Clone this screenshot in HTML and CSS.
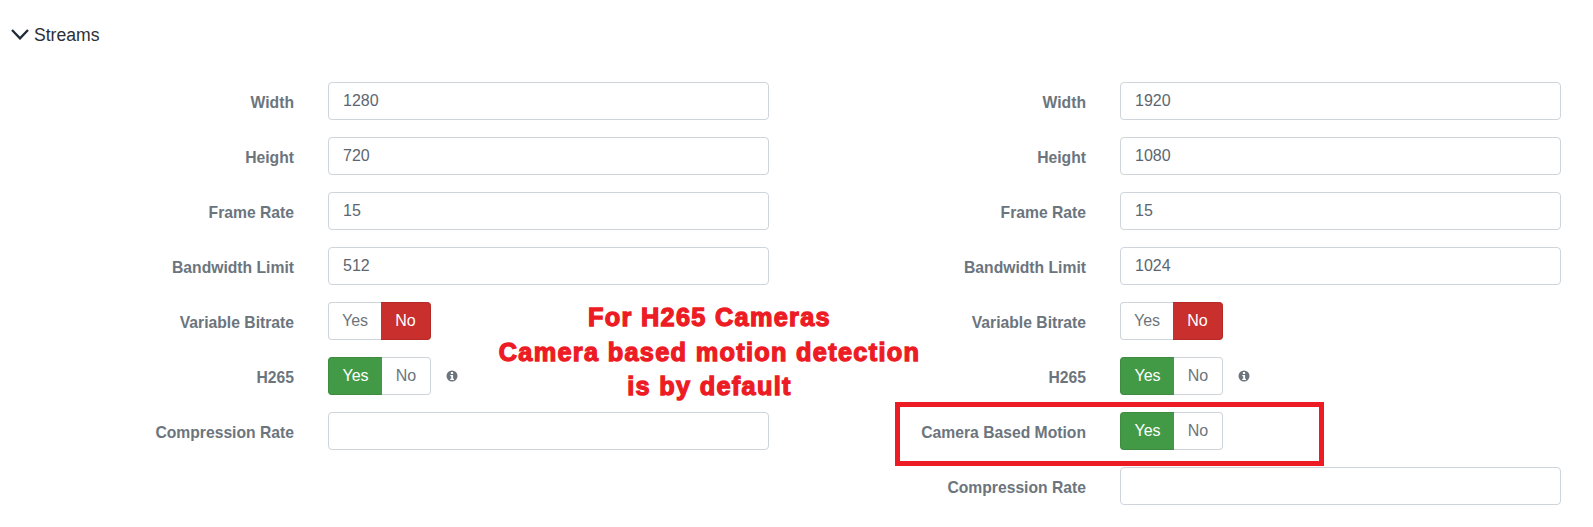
FILE: index.html
```html
<!DOCTYPE html>
<html lang="en">
<head>
<meta charset="utf-8">
<title>Streams</title>
<link rel="stylesheet" href="styles.css">
</head>
<body>
<header class="section-head">
  <svg class="chevron" viewBox="0 0 18 11" width="18" height="11"><path d="M1 1 9 9.400 17 1" fill="none" stroke="#212b36" stroke-width="2.300"/></svg>
  <span>Streams</span>
</header>
<main class="columns">
  <section class="col">
    <div class="row"><label>Width</label><input class="field" value="1280"></div>
    <div class="row"><label>Height</label><input class="field" value="720"></div>
    <div class="row"><label>Frame Rate</label><input class="field" value="15"></div>
    <div class="row"><label>Bandwidth Limit</label><input class="field" value="512"></div>
    <div class="row"><label>Variable Bitrate</label><div class="toggle"><span class="opt narrow">Yes</span><span class="opt no-on">No</span></div></div>
    <div class="row"><label>H265</label><div class="toggle"><span class="opt yes-on">Yes</span><span class="opt">No</span></div>
      <svg class="info" viewBox="0 0 12 12" width="12" height="12"><circle cx="6" cy="6" r="5.5" fill="#6c757d"/><rect x="4.9" y="2" width="2.2" height="2" fill="#fff"/><path d="M4.3 5h2.800v3.800h.9V10H4.200V8.800h1V6.200h-.9z" fill="#fff"/></svg></div>
    <div class="row"><label>Compression Rate</label><input class="field" value=""></div>
  </section>
  <section class="col">
    <div class="row"><label>Width</label><input class="field" value="1920"></div>
    <div class="row"><label>Height</label><input class="field" value="1080"></div>
    <div class="row"><label>Frame Rate</label><input class="field" value="15"></div>
    <div class="row"><label>Bandwidth Limit</label><input class="field" value="1024"></div>
    <div class="row"><label>Variable Bitrate</label><div class="toggle"><span class="opt narrow">Yes</span><span class="opt no-on">No</span></div></div>
    <div class="row"><label>H265</label><div class="toggle"><span class="opt yes-on">Yes</span><span class="opt">No</span></div>
      <svg class="info" viewBox="0 0 12 12" width="12" height="12"><circle cx="6" cy="6" r="5.5" fill="#6c757d"/><rect x="4.9" y="2" width="2.2" height="2" fill="#fff"/><path d="M4.3 5h2.800v3.800h.9V10H4.200V8.800h1V6.200h-.9z" fill="#fff"/></svg></div>
    <div class="row"><label>Camera Based Motion</label><div class="toggle"><span class="opt yes-on">Yes</span><span class="opt">No</span></div></div>
    <div class="row"><label>Compression Rate</label><input class="field" value=""></div>
  </section>
</main>
<div class="note">For H265 Cameras<br>Camera based motion detection<br>is by default</div>
<div class="highlight"></div>
</body>
</html>
```
FILE: styles.css
```css
* { box-sizing: border-box; }
html, body { margin: 0; padding: 0; }
body {
  width: 1593px;
  height: 527px;
  overflow: hidden;
  background: #fff;
  font-family: "Liberation Sans", Arial, sans-serif;
  position: relative;
}
.section-head {
  display: flex;
  align-items: center;
  gap: 5px;
  height: 20px;
  margin-top: 25px;
  padding-left: 11px;
  font-size: 17.6px;
  color: #2b3035;
}
.chevron { margin-top: -2px; }
.columns {
  display: grid;
  grid-template-columns: 792px 792px;
  margin-top: 37px;
}
.col { display: flex; flex-direction: column; gap: 17px; }
.row { display: flex; align-items: center; height: 38px; }
.row label {
  width: 294px;
  margin-right: 34px;
  text-align: right;
  font-size: 15.7px;
  font-weight: 700;
  color: #6c757d;
  padding-top: 4px;
}
.field {
  width: 441px;
  height: 38px;
  padding: 0 14px;
  border: 1px solid #ced4da;
  border-radius: 4px;
  font: 16px "Liberation Sans", Arial, sans-serif;
  color: #5c6670;
  background: #fff;
  outline: none;
}
.toggle { display: flex; height: 38px; width: 103px; font-size: 16px; }
.opt {
  display: flex;
  align-items: center;
  justify-content: center;
  flex: 1;
  border: 1px solid #ced4da;
  color: #6c757d;
  background: #fff;
}
.opt:first-child { border-radius: 4px 0 0 4px; border-right: 0; flex: 0 0 54px; }
.opt.narrow { flex-basis: 53px; }
.opt:last-child { border-radius: 0 4px 4px 0; border-left: 0; }
.yes-on { background: #439a46; border-color: #3d8c40; color: #fff; }
.no-on { background: #c92f2c; border-color: #b52a27; color: #fff; }
.info { margin-left: 15px; }
.note {
  position: absolute;
  left: 459.500px;
  top: 300px;
  width: 500px;
  text-align: center;
  font-size: 25.300px;
  line-height: 34.500px;
  font-weight: 700;
  letter-spacing: 1.300px;
  color: #ed1c24;
  -webkit-text-stroke: 1.300px #ed1c24;
}
.highlight {
  position: absolute;
  left: 895px;
  top: 402px;
  width: 429px;
  height: 64px;
  border: 5px solid #ed1c24;
}
```
